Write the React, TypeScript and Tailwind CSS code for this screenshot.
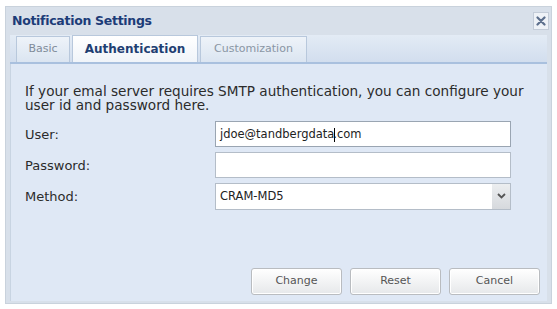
import React from 'react';

const font = { fontFamily: '"DejaVu Sans", Tahoma, sans-serif' };

const Field = ({ label, children }: { label: string; children: React.ReactNode }) => (
  <div className="flex items-center h-[26px]">
    <div className="w-[190px] pt-[2px] text-[13px] text-[#2b2b2b]">{label}</div>
    {children}
  </div>
);

const Button = ({ text }: { text: string }) => (
  <button className="w-[91px] h-[27px] rounded-[3px] border border-[#b9bcc0] bg-gradient-to-b from-white to-[#e6e8ea] text-[11px] text-[#555] shadow-[inset_0_0_0_1px_#fff]">
    {text}
  </button>
);

export default function App() {
  return (
    <div className="w-[557px] h-[309px] bg-white pt-[6px] pl-[5px]" style={font}>
      <div className="w-[547px] h-[298px] border border-[#c9d2dc] bg-[#d8e0ea] flex flex-col px-[4px] pb-[2px]">
        {/* title bar */}
        <div className="h-[28px] flex items-center justify-between pl-[2px] -mr-[2px] shrink-0">
          <span className="text-[12.5px] font-bold text-[#1c3c78] tracking-[-0.3px]">Notification Settings</span>
          <div className="w-[16px] h-[18px] border border-[#c3ccd8] bg-[#eef2f7] flex items-center justify-center">
            <svg width="10" height="10" viewBox="0 0 10 10">
              <path d="M1.5 1.5 L8.5 8.5 M8.5 1.5 L1.5 8.5" stroke="#5c6f8c" strokeWidth="2.2" strokeLinecap="round" />
            </svg>
          </div>
        </div>
        {/* tab strip */}
        <div className="h-[29px] shrink-0 bg-gradient-to-b from-[#e3ebf5] to-[#d2deee] border-b-2 border-[#a9c0de] flex items-end pl-[6px] gap-[2px]">
          <div className="w-[54px] h-[26px] border border-b-0 border-[#b8c8dc] bg-gradient-to-b from-[#eef3f9] to-[#dbe5f1] flex items-center justify-center text-[11px] text-[#7f8b99]">
            Basic
          </div>
          <div className="w-[126px] h-[27px] border border-b-0 border-[#b8c8dc] bg-gradient-to-b from-white to-[#f0f4f9] flex items-center justify-center text-[12px] font-bold text-[#1f3f72]">
            Authentication
          </div>
          <div className="w-[107px] h-[26px] border border-b-0 border-[#b8c8dc] bg-gradient-to-b from-[#eef3f9] to-[#dbe5f1] flex items-center justify-center text-[11px] text-[#8a96a4]">
            Customization
          </div>
        </div>
        {/* body */}
        <div className="flex-1 bg-[#dfe8f5] border-l border-[#c8d4e2] pl-[14px] pt-[20px] flex flex-col">
          <p className="text-[13.6px] leading-[14px] text-[#2b2b2b] w-[500px]">
            If your emal server requires SMTP authentication, you can configure your user id and password here.
          </p>
          <div className="mt-[9px] flex flex-col gap-[5px]">
            <Field label="User:">
              <div className="w-[296px] h-[26px] border border-[#9aa5b2] bg-white flex items-center pl-[4px] pt-[2px] text-[11.5px] text-[#222]">
                jdoe@tandbergdata<span className="inline-block w-px h-[14px] bg-black -mr-[2px]" />.com
              </div>
            </Field>
            <Field label="Password:">
              <div className="w-[296px] h-[26px] border border-[#b4bdc8] bg-white" />
            </Field>
            <Field label="Method:">
              <div className="w-[296px] h-[27px] border border-[#b4bdc8] bg-white flex items-center justify-between text-[11.5px] text-[#222]">
                <span className="pl-[4px] pt-[2px]">CRAM-MD5</span>
                <div className="w-[18px] h-full bg-gradient-to-b from-[#eceef0] to-[#d6d9dd] flex items-center justify-center">
                  <svg width="9" height="6" viewBox="0 0 9 6">
                    <path d="M1 1 L4.5 4.5 L8 1" stroke="#555" strokeWidth="1.8" fill="none" />
                  </svg>
                </div>
              </div>
            </Field>
          </div>
          <div className="mt-auto mb-[6px] flex justify-end gap-[8px] pr-[7px]">
            <Button text="Change" />
            <Button text="Reset" />
            <Button text="Cancel" />
          </div>
        </div>
      </div>
    </div>
  );
}
